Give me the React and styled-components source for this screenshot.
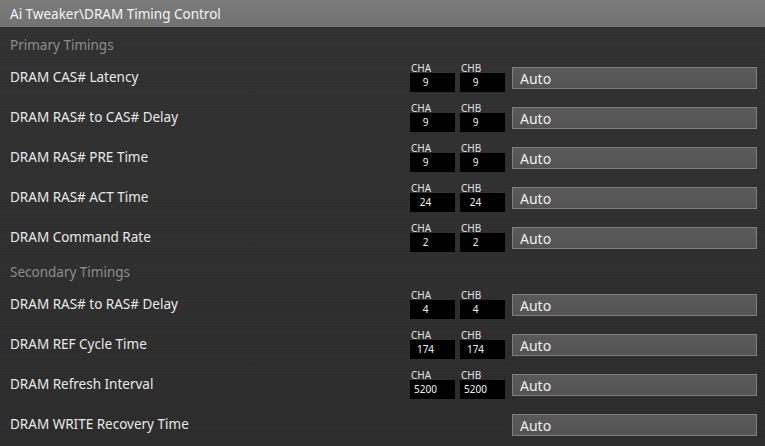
import React from 'react';
import styled, { createGlobalStyle } from 'styled-components';

const GlobalStyle = createGlobalStyle`
  html, body {
    margin: 0;
    padding: 0;
    background: #303030;
  }
  body {
    font-family: 'Noto Sans', 'Open Sans', sans-serif;
  }
`;

const Screen = styled.div`
  width: 765px;
  height: 446px;
  overflow: hidden;
  background:
    repeating-linear-gradient(
      180deg,
      rgba(255, 255, 255, 0.012) 0px,
      rgba(255, 255, 255, 0.012) 1px,
      rgba(0, 0, 0, 0.02) 2px,
      rgba(0, 0, 0, 0) 3px
    ),
    linear-gradient(180deg, #313131 0%, #2f2f2f 50%, #2c2c2c 100%);
`;

const TitleBar = styled.div`
  height: 27px;
  display: flex;
  align-items: center;
  padding: 0 10px;
  background: linear-gradient(180deg, #7b7b7b 0%, #727272 100%);
  color: #f4f4f4;
  font-size: 13.5px;
`;

const Section = styled.div`
  height: 27px;
  display: flex;
  align-items: center;
  padding: 0 10px;
  margin-top: ${(p) => (p.first ? '4px' : '0')};
  color: #8d8d8d;
  font-size: 13.5px;
`;

const Row = styled.div`
  height: 40px;
  display: flex;
  align-items: center;
  padding: 0 8px 0 10px;
`;

const Label = styled.div`
  flex: 1;
  color: #e9e9e9;
  font-size: 13.5px;
  padding-bottom: 2px;
`;

const Channels = styled.div`
  width: 95px;
  display: flex;
  gap: 5px;
  margin-right: 7px;
  padding-bottom: 2px;
`;

const Channel = styled.div`
  width: 45px;
  display: flex;
  flex-direction: column;
`;

const ChannelName = styled.div`
  color: #e2e2e2;
  font-size: 10px;
  line-height: 10px;
  padding-left: 1px;
`;

const ChannelValue = styled.div`
  height: 19px;
  background: #000;
  color: #f2f2f2;
  font-size: 10px;
  line-height: 19px;
  text-align: center;
  padding-right: 14px;
  box-sizing: border-box;
`;

const Field = styled.div`
  width: 245px;
  height: 22px;
  box-sizing: border-box;
  border: 1px solid #7e7e7e;
  background: linear-gradient(180deg, #5a5a5a 0%, #545454 100%);
  color: #f0f0f0;
  font-size: 14px;
  display: flex;
  align-items: center;
  padding-left: 7px;
`;

const primary = [
  { name: 'DRAM CAS# Latency', a: '9', b: '9' },
  { name: 'DRAM RAS# to CAS# Delay', a: '9', b: '9' },
  { name: 'DRAM RAS# PRE Time', a: '9', b: '9' },
  { name: 'DRAM RAS# ACT Time', a: '24', b: '24' },
  { name: 'DRAM Command Rate', a: '2', b: '2' },
];

const secondary = [
  { name: 'DRAM RAS# to RAS# Delay', a: '4', b: '4' },
  { name: 'DRAM REF Cycle Time', a: '174', b: '174' },
  { name: 'DRAM Refresh Interval', a: '5200', b: '5200' },
  { name: 'DRAM WRITE Recovery Time' },
];

function TimingRow({ item }) {
  return (
    <Row>
      <Label>{item.name}</Label>
      <Channels>
        {item.a && (
          <>
            <Channel>
              <ChannelName>CHA</ChannelName>
              <ChannelValue>{item.a}</ChannelValue>
            </Channel>
            <Channel>
              <ChannelName>CHB</ChannelName>
              <ChannelValue>{item.b}</ChannelValue>
            </Channel>
          </>
        )}
      </Channels>
      <Field>Auto</Field>
    </Row>
  );
}

export default function App() {
  return (
    <Screen>
      <GlobalStyle />
      <TitleBar>Ai Tweaker\DRAM Timing Control</TitleBar>
      <Section first>Primary Timings</Section>
      {primary.map((item) => (
        <TimingRow key={item.name} item={item} />
      ))}
      <Section>Secondary Timings</Section>
      {secondary.map((item) => (
        <TimingRow key={item.name} item={item} />
      ))}
    </Screen>
  );
}
